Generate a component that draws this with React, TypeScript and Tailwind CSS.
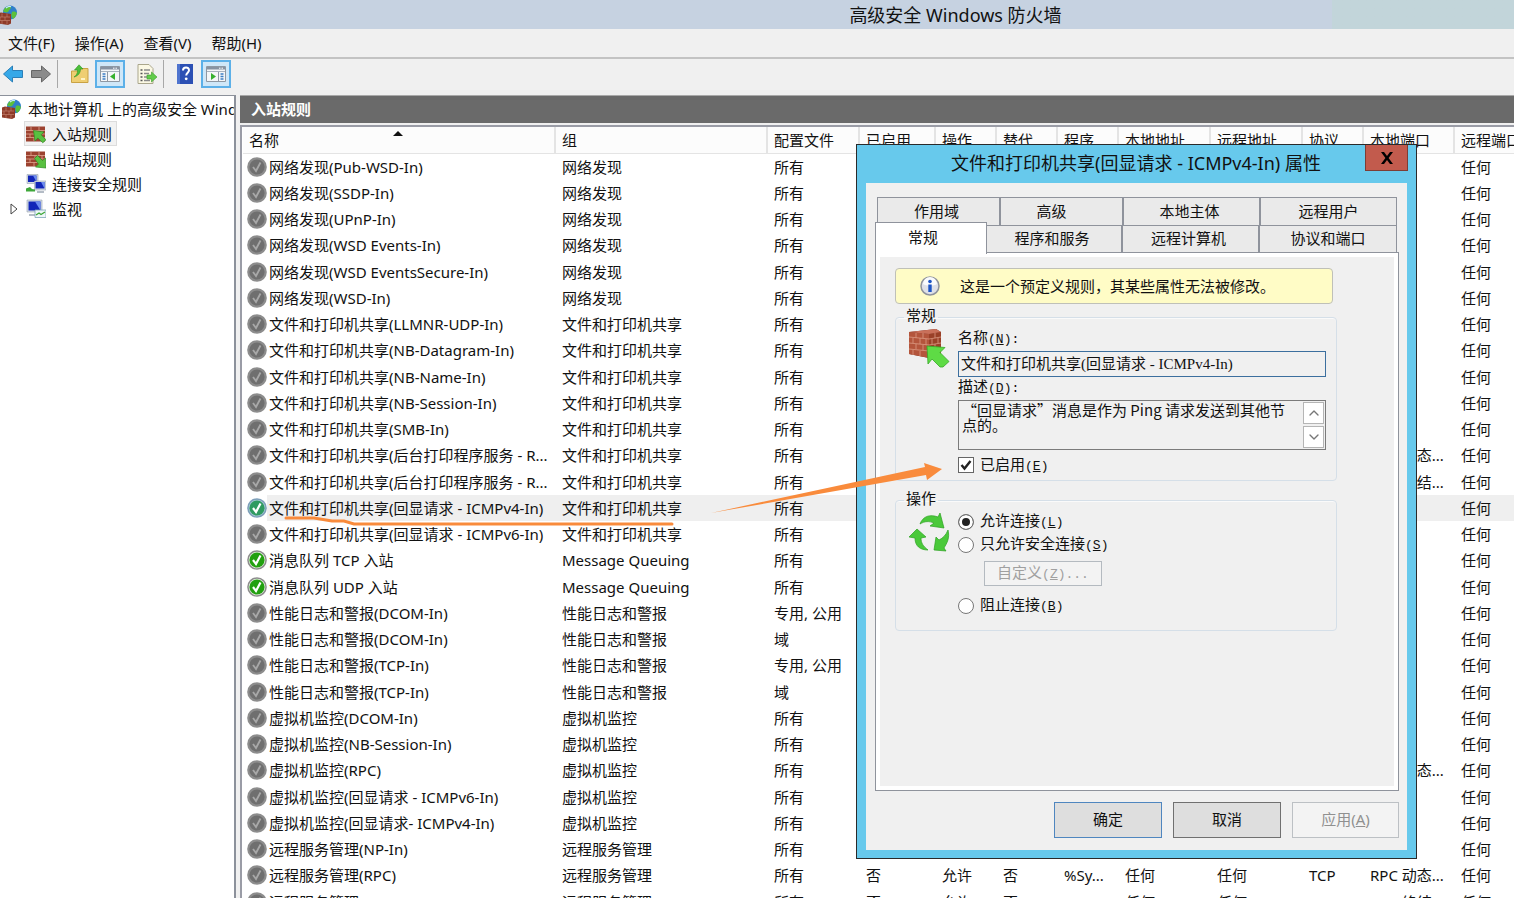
import React, { useState } from 'react';
import { ChevronDown, ChevronUp } from 'lucide-react';

type RuleState = 'off' | 'on' | 'selected';

interface Rule {
  name: string;
  group: string;
  profile: string;
  state?: RuleState;
  program?: string;
  protocol?: string;
  localPort?: string;
}

const DISCOVERY = '网络发现';
const SHARING = '文件和打印机共享';
const PERF = '性能日志和警报';
const VM = '虚拟机监控';
const REMOTE = '远程服务管理';

const RULES: Rule[] = [
  { name: '网络发现(Pub-WSD-In)', group: DISCOVERY, profile: '所有', protocol: 'UDP', localPort: '3702' },
  { name: '网络发现(SSDP-In)', group: DISCOVERY, profile: '所有', protocol: 'UDP', localPort: '1900' },
  { name: '网络发现(UPnP-In)', group: DISCOVERY, profile: '所有', localPort: '2869' },
  { name: '网络发现(WSD Events-In)', group: DISCOVERY, profile: '所有', localPort: '5357' },
  { name: '网络发现(WSD EventsSecure-In)', group: DISCOVERY, profile: '所有', localPort: '5358' },
  { name: '网络发现(WSD-In)', group: DISCOVERY, profile: '所有', protocol: 'UDP', localPort: '3702' },
  { name: '文件和打印机共享(LLMNR-UDP-In)', group: SHARING, profile: '所有', protocol: 'UDP', localPort: '5355' },
  { name: '文件和打印机共享(NB-Datagram-In)', group: SHARING, profile: '所有', protocol: 'UDP', localPort: '138' },
  { name: '文件和打印机共享(NB-Name-In)', group: SHARING, profile: '所有', protocol: 'UDP', localPort: '137' },
  { name: '文件和打印机共享(NB-Session-In)', group: SHARING, profile: '所有', localPort: '139' },
  { name: '文件和打印机共享(SMB-In)', group: SHARING, profile: '所有', localPort: '445' },
  { name: '文件和打印机共享(后台打印程序服务 - R...', group: SHARING, profile: '所有', localPort: 'RPC 动态...' },
  { name: '文件和打印机共享(后台打印程序服务 - R...', group: SHARING, profile: '所有', localPort: 'RPC 终结...' },
  { name: '文件和打印机共享(回显请求 - ICMPv4-In)', group: SHARING, profile: '所有', state: 'selected', protocol: 'ICMPv4' },
  { name: '文件和打印机共享(回显请求 - ICMPv6-In)', group: SHARING, profile: '所有', protocol: 'ICMPv6' },
  { name: '消息队列 TCP 入站', group: 'Message Queuing', profile: '所有', state: 'on' },
  { name: '消息队列 UDP 入站', group: 'Message Queuing', profile: '所有', state: 'on', protocol: 'UDP' },
  { name: '性能日志和警报(DCOM-In)', group: PERF, profile: '专用, 公用', localPort: '135' },
  { name: '性能日志和警报(DCOM-In)', group: PERF, profile: '域', localPort: '135' },
  { name: '性能日志和警报(TCP-In)', group: PERF, profile: '专用, 公用' },
  { name: '性能日志和警报(TCP-In)', group: PERF, profile: '域' },
  { name: '虚拟机监控(DCOM-In)', group: VM, profile: '所有', localPort: '135' },
  { name: '虚拟机监控(NB-Session-In)', group: VM, profile: '所有', localPort: '139' },
  { name: '虚拟机监控(RPC)', group: VM, profile: '所有', localPort: 'RPC 动态...' },
  { name: '虚拟机监控(回显请求 - ICMPv6-In)', group: VM, profile: '所有', protocol: 'ICMPv6' },
  { name: '虚拟机监控(回显请求- ICMPv4-In)', group: VM, profile: '所有', protocol: 'ICMPv4' },
  { name: '远程服务管理(NP-In)', group: REMOTE, profile: '所有', localPort: '445' },
  { name: '远程服务管理(RPC)', group: REMOTE, profile: '所有', localPort: 'RPC 动态...' },
  { name: '远程服务管理(RPC-EPMAP)', group: REMOTE, profile: '所有', localPort: 'RPC 终结...' },
];

const COLUMNS = [
  { label: '名称', width: 'w-[312px]' },
  { label: '组', width: 'w-[212px]' },
  { label: '配置文件', width: 'w-[92px]' },
  { label: '已启用', width: 'w-[76px]' },
  { label: '操作', width: 'w-[61px]' },
  { label: '替代', width: 'w-[61px]' },
  { label: '程序', width: 'w-[61px]' },
  { label: '本地地址', width: 'w-[92px]' },
  { label: '远程地址', width: 'w-[92px]' },
  { label: '协议', width: 'w-[61px]' },
  { label: '本地端口', width: 'w-[91px]' },
  { label: '远程端口', width: '' },
];

/* ---------- icons ---------- */

const FirewallGlobe: React.FC = () => (
  <svg className="h-5 w-5 shrink-0" viewBox="0 0 20 20" aria-hidden="true">
    <circle cx="12" cy="7.5" r="7" fill="#2f7fc9" />
    <path d="M7 3c2-2 5-2 6-1 0 2-2 3-3 5-2 1-4 0-5-1zM14 7c2-1 4 0 5 1-1 3-2 5-4 6-2-2-2-5-1-7z" fill="#5cc03a" />
    <path d="M8 3c2-1.600 4-1.800 5-1.300" stroke="#c8ecff" strokeWidth="1.200" fill="none" />
    <path d="M0 8.500 3 7.500 13 9v9.500L10 20 0 18.500z" fill="#8e3a28" />
    <path d="M0 12h12M0 15.500h12M4 8.500V12M9 8.500V12M2 12v3.500M7 12v3.500M4 15.500V19M9 15.500v4" stroke="#c98a76" strokeWidth=".6" />
  </svg>
);

const BrickRule: React.FC<{ out?: boolean }> = ({ out }) => (
  <svg className="h-5 w-5 shrink-0" viewBox="0 0 20 20" aria-hidden="true">
    <path d="M0 2.500h19v15H0z" fill="#9c4230" />
    <path d="M0 6.500h19M0 10h19M0 13.500h19M5 3v3.500M13 3v3.500M9 6.500V10M16 6.500V10M4 10v3.500M12 10v3.500M8 13.500V17M15 13.500V17" stroke="#dfa591" strokeWidth=".8" />
    {out ? (
      <path d="m8.500 9.500 3-3 5 5 3-2.500.5 10-10.500-1 3-3z" fill="#58c040" stroke="#2f8a24" strokeWidth=".7" />
    ) : (
      <path d="M7.500 6.500 18 8l-2.800 2.800 4.800 5-3.200 3-5-4.800L9 17z" fill="#58c040" stroke="#2f8a24" strokeWidth=".7" />
    )}
  </svg>
);

const Computers: React.FC = () => (
  <svg className="h-5 w-5 shrink-0" viewBox="0 0 20 20" aria-hidden="true">
    <path d="M1 .5h11v9H1z" fill="#d5dde6" stroke="#97a3b0" strokeWidth=".6" />
    <path d="M2 1.500h8.500V8H2z" fill="#1226b8" />
    <path d="M7 1.500h3.500V8z" fill="#6d8df0" />
    <path d="M8.500 7H20v9H8.500z" fill="#d5dde6" stroke="#97a3b0" strokeWidth=".6" />
    <path d="M9.500 8h9v6.500h-9z" fill="#1226b8" />
    <path d="M15 8h3.500v6.500z" fill="#6d8df0" />
    <path d="M11 17h7v2h-7z" fill="#b4bcc6" />
    <path d="M0 14.500 4 13l2 2 3 .5v2H0z" fill="#3fa83a" />
  </svg>
);

const MonitorChart: React.FC = () => (
  <svg className="h-5 w-5 shrink-0" viewBox="0 0 20 20" aria-hidden="true">
    <path d="M1 1h15v12H1z" fill="#d5dde6" stroke="#97a3b0" strokeWidth=".6" />
    <path d="M2.500 2.500h12v9h-12z" fill="#1226b8" />
    <path d="M9 2.500h5.500v9z" fill="#6d8df0" />
    <path d="M3 15h8v2H3z" fill="#b4bcc6" />
    <path d="M9 11h11v7.500H9z" fill="#eef6f8" stroke="#7fa6b8" strokeWidth=".8" />
    <path d="m10 16 3-2 2 1.500 4-2.500" stroke="#3fa83a" strokeWidth="1.400" fill="none" />
  </svg>
);

const StatusIcon: React.FC<{ state: RuleState }> = ({ state }) => {
  const ring = state === 'selected' ? '#7d9fb9' : '#8d8d8d';
  const fill = state === 'off' ? '#6f6f6f' : state === 'on' ? '#22a010' : '#2f9a60';
  return (
    <svg className="h-5 w-5 shrink-0" viewBox="0 0 20 20" aria-hidden="true">
      <circle cx="10" cy="10" r="9.800" fill={ring} />
      {state !== 'off' && <circle cx="10" cy="10" r="8.300" fill={state === 'on' ? '#e8f3e4' : '#a9cbd6'} />}
      <circle cx="10" cy="10" r="7.600" fill={fill} />
      <path
        d="m6 10 3 4 4.500-8.500"
        fill="none"
        stroke={state === 'off' ? '#a8a8a8' : '#ffffff'}
        strokeWidth={state === 'off' ? 1.8 : 2.2}
      />
    </svg>
  );
};

const ArrowIcon: React.FC<{ forward?: boolean }> = ({ forward }) => (
  <svg className="h-5 w-5" viewBox="0 0 20 20" aria-hidden="true">
    {forward ? (
      <path d="M.5 6.500h10V2l9 8-9 8v-4.500H.5z" fill="#8b8b8b" stroke="#666" />
    ) : (
      <path d="M19.500 6.500h-10V2l-9 8 9 8v-4.500h10z" fill="#36a8e8" stroke="#2b7fb8" />
    )}
  </svg>
);

const FolderUp: React.FC = () => (
  <svg className="h-5 w-5" viewBox="0 0 20 20" aria-hidden="true">
    <path d="M1.500 7h7l1.500-2.500h8V18.500h-16.500z" fill="#efce72" stroke="#c9a244" />
    <path d="M11 14h4v2h-4z" fill="#fff3c4" />
    <path d="M4 13c2-1 4-4 3.500-7H4.500L9 .8 13 5h-2.500c0 4-2.500 7-6.500 8z" fill="#4cbf3a" stroke="#2f9424" strokeWidth=".6" />
  </svg>
);

const PaneIcon: React.FC<{ right?: boolean }> = ({ right }) => (
  <svg className="h-5 w-5" viewBox="0 0 20 20" aria-hidden="true">
    <path d="M.5 2.500h19v15H.5z" fill="#f4f6f8" stroke="#8e98a3" />
    <path d="M1 3h18v2.500H1z" fill="#8793a2" />
    <path d="M13 4.200h1.500M15.500 4.200H17" stroke="#fff" />
    <path d="M1 7.500h18" stroke="#a9b3be" />
    {right ? (
      <>
        <path d="M12.500 8v9.500" stroke="#8e98a3" />
        <path d="M14.500 10h3M14.500 12.500h3M14.500 15h3" stroke="#3d7fc4" strokeWidth="1.300" />
        <path d="m5 9 5 3.500L5 16z" fill="#38b130" />
      </>
    ) : (
      <>
        <path d="M7.500 8v9.500" stroke="#8e98a3" />
        <path d="M2.500 10h3M2.500 12.500h3M2.500 15h3" stroke="#3d7fc4" strokeWidth="1.300" />
        <path d="m15 9-5 3.500 5 3.500z" fill="#38b130" />
      </>
    )}
  </svg>
);

const ExportIcon: React.FC = () => (
  <svg className="h-5 w-5" viewBox="0 0 20 20" aria-hidden="true">
    <path d="M1 .5h11l4 4v15H1z" fill="#fbf8e4" stroke="#aaa68c" />
    <path d="M3.500 6h2M3.500 9.500h2M3.500 13h2M3.500 16.500h2" stroke="#555" strokeWidth="1.300" />
    <path d="M7 6h6M7 9.500h5M7 13h3M7 16.500h6" stroke="#8a8a8a" strokeWidth="1.300" />
    <path d="M10 11h4.500V8l5.500 5-5.500 5v-3H10z" fill="#63cc4b" stroke="#3c9d2c" strokeWidth=".6" />
  </svg>
);

const HelpBook: React.FC = () => (
  <svg className="h-5 w-4" viewBox="0 0 16 20" aria-hidden="true">
    <path d="M0 0h16v20H0z" fill="#2c50b4" />
    <path d="M0 0h3v20H0z" fill="#4f74cf" />
    <path d="M6 6.500c0-4 6-4 6-.3 0 2.500-2.800 2.500-2.800 5.300" fill="none" stroke="#fff" strokeWidth="2" />
    <circle cx="9.200" cy="14.800" r="1.400" fill="#fff" />
  </svg>
);

const InfoIcon: React.FC = () => (
  <svg className="h-5 w-5 shrink-0" viewBox="0 0 20 20" aria-hidden="true">
    <circle cx="10" cy="10" r="9" fill="#dfe1e8" stroke="#8f939c" strokeWidth="1.500" />
    <path d="M3 8a7 7 0 0 1 14 0c-3 2-11 2-14 0z" fill="#fafbfd" />
    <circle cx="10" cy="5.500" r="1.800" fill="#1d55c4" />
    <path d="M8.300 8.500h3.400V16H8.300z" fill="#1d55c4" />
  </svg>
);

const LargeBrick: React.FC = () => (
  <svg className="mt-0.5 h-10 w-[42px] shrink-0" viewBox="0 0 42 40" aria-hidden="true">
    <path d="M1 3 28 0l5 3v22l-12 4L1 25z" fill="#7a2d1e" />
    <path d="m1 3 20 2v24L1 25z" fill="#b4553c" />
    <path d="m21 5 12-2v22l-12 4z" fill="#9a4028" />
    <path d="M1 3 28 0l5 3-12 2z" fill="#c9705a" />
    <path d="m1 8 20 2 12-2M1 14l20 2 12-2M1 20l20 2 12-2M8 4v5M15 4v5M5 9v5M12 9v6M18 10v6M8 15v5M15 16v5M5 21v5M12 22v5M27 4v5M24 10v5M30 9v5M27 15v5M24 22v5" stroke="#dc9a84" strokeWidth=".8" fill="none" />
    <path d="m19 17 18 1.500-5 5 9 9-6 5.500h-3l-8-8-4 5z" fill="#5edb45" stroke="#35a826" strokeWidth=".8" />
  </svg>
);

const CycleIcon: React.FC = () => (
  <svg className="mt-0.5 h-10 w-[42px] shrink-0" viewBox="0 0 42 40" aria-hidden="true">
    <g fill="#4ac93a" stroke="#2ba01f" strokeWidth=".7">
      <path d="M12 12C15 4 22 2 30 5l2-4 4 15-14-2 4-3c-5-2-9-2-14 1z" />
      <path d="M1 25 9 17l9 8-5 1c0 5 2 8 7 12-8 0-13-4-13-12z" />
      <path d="M40 18c2 8-1 13-4 18l2 3-12-1 2-13 3 3c4-2 7-5 9-10z" />
    </g>
  </svg>
);

/* ---------- main window ---------- */

const MENUS = ['文件(F)', '操作(A)', '查看(V)', '帮助(H)'];

const Toolbar: React.FC = () => (
  <div className="flex h-9 items-center pb-1.5 pl-[3px]" role="toolbar">
    <button aria-label="后退"><ArrowIcon /></button>
    <button aria-label="前进" className="ml-2"><ArrowIcon forward /></button>
    <span className="ml-1.5 h-7 w-px bg-[#a8a8a8]" />
    <button aria-label="上一级" className="ml-3"><FolderUp /></button>
    <button aria-label="显示控制台树" className="ml-[5px] flex h-7 w-[30px] items-center justify-center border-2 border-[#5cb0e8] bg-[#cfe7f8]">
      <PaneIcon />
    </button>
    <button aria-label="导出列表" className="ml-3"><ExportIcon /></button>
    <span className="ml-1.5 h-7 w-px bg-[#a8a8a8]" />
    <button aria-label="帮助" className="ml-[13px]"><HelpBook /></button>
    <button aria-label="显示操作窗格" className="ml-2 flex h-7 w-[30px] items-center justify-center border-2 border-[#5cb0e8] bg-[#cfe7f8]">
      <PaneIcon right />
    </button>
  </div>
);

const NAV = [
  { label: '入站规则', icon: <BrickRule />, selected: true },
  { label: '出站规则', icon: <BrickRule out /> },
  { label: '连接安全规则', icon: <Computers /> },
  { label: '监视', icon: <MonitorChart />, expandable: true },
];

const Tree: React.FC = () => (
  <nav className="w-[236px] shrink-0 overflow-hidden border-t border-r-2 border-[#8c919b] bg-white whitespace-nowrap">
    <div className="flex h-[25px] items-center gap-1.5 pl-0.5">
      <FirewallGlobe />
      <span>本地计算机 上的高级安全 Windows 防火墙</span>
    </div>
    {NAV.map((item) => (
      <div key={item.label} className="flex h-[25px] items-center">
        <span className="flex w-6 justify-center pl-1">
          {item.expandable && (
            <svg className="h-3 w-2" viewBox="0 0 8 12" aria-hidden="true">
              <path d="m1 1 6 5-6 5z" fill="#fff" stroke="#444" />
            </svg>
          )}
        </span>
        <button
          className={`flex h-[25px] items-center gap-1.5 border px-px pr-1 ${
            item.selected ? 'border-[#dcdcdc] bg-[#f2f2f2]' : 'border-transparent'
          }`}
        >
          {item.icon}
          {item.label}
        </button>
      </div>
    ))}
  </nav>
);

const RuleTable: React.FC = () => (
  <table className="w-full table-fixed border-collapse text-left whitespace-nowrap">
    <thead>
      <tr className="h-[26px]">
        {COLUMNS.map((col, idx) => (
          <th
            key={col.label}
            className={`relative overflow-hidden border-r-2 border-b border-[#e4e4e4] bg-[#fcfcfc] p-0 pl-[6px] font-normal last:border-r-0 ${col.width}`}
          >
            {col.label}
            {idx === 0 && (
              <svg className="absolute top-1 left-[150px] h-[5px] w-2.5" viewBox="0 0 10 5" aria-hidden="true">
                <path d="M0 5 5 0l5 5z" fill="#111" />
              </svg>
            )}
          </th>
        ))}
      </tr>
    </thead>
    <tbody>
      {RULES.map((rule, idx) => {
        const active = rule.state === 'selected';
        const cells = [
          rule.group,
          rule.profile,
          rule.state ? '是' : '否',
          '允许',
          '否',
          rule.protocol?.startsWith('ICMP') ? '任何' : '%Sy...',
          '任何',
          '任何',
          rule.protocol ?? 'TCP',
          rule.localPort ?? '任何',
          '任何',
        ];
        return (
          <tr key={idx} className="h-[26px] nth-[4n]:h-[27px]">
            <td className="p-0">
              <div className="flex h-[26px] items-center pl-1">
                <StatusIcon state={rule.state ?? 'off'} />
                <span className={`h-[26px] flex-1 pl-0.5 leading-[26px] ${active ? 'bg-[#efefef]' : ''}`}>{rule.name}</span>
              </div>
            </td>
            {cells.map((cell, i) => (
              <td key={i} className={`overflow-hidden p-0 pl-[7px] ${active ? 'bg-[#efefef]' : ''}`}>
                {cell}
              </td>
            ))}
          </tr>
        );
      })}
    </tbody>
  </table>
);

/* ---------- properties dialog ---------- */

const Key: React.FC<{ k: string; after?: string }> = ({ k, after = '' }) => (
  <span className="font-['Liberation_Mono',monospace] text-[13px]">
    (<u>{k}</u>){after}
  </span>
);

const BACK_TABS = [
  { label: '作用域', width: 'w-[124px] pr-1' },
  { label: '高级', width: 'w-[123px] pr-5' },
  { label: '本地主体', width: 'w-[137px] pr-1' },
  { label: '远程用户', width: 'flex-1' },
];

const FRONT_TABS = [
  { label: '程序和服务', width: 'w-[136px] pr-1' },
  { label: '远程计算机', width: 'w-[137px] pr-1' },
  { label: '协议和端口', width: 'flex-1' },
];

const TAB = 'border-t border-r-2 border-[#8f939c] bg-[#eaeaea] last:border-r';
const RADIO =
  'h-4 w-4 appearance-none rounded-full border border-[#777] bg-white checked:bg-[#222] checked:shadow-[inset_0_0_0_3px_#fff]';
const GROUP = 'rounded border border-[#d5dfe8] pl-3 shadow-[inset_0_1px_0_#fafafa]';
const LEGEND = '-ml-1 h-5 px-0.5 leading-4';

const PropertiesDialog: React.FC = () => {
  const [enabled, setEnabled] = useState(true);
  const [action, setAction] = useState('allow');

  return (
    <section
      role="dialog"
      aria-labelledby="dialog-title"
      className="absolute top-36 left-[856px] w-[561px] border border-[#2a2a2a] bg-[#67c9ec] px-[9px] pb-2 leading-5"
    >
      <header className="flex h-[38px] items-start">
        <h2 id="dialog-title" className="flex-1 pl-[41px] text-center text-[18px] leading-9">
          文件和打印机共享(回显请求 - ICMPv4-In) 属性
        </h2>
        <button aria-label="关闭" className="-mr-px flex h-[26px] w-[43px] items-center justify-center border border-t-0 border-[#7d3d35] bg-[#c25b4d]">
          <svg className="h-3 w-3.5" viewBox="0 0 14 12" aria-hidden="true">
            <path d="M1 0h3l3 4 3-4h3L8.600 6 13 12h-3L7 8l-3 4H1l4.400-6z" fill="#000" />
          </svg>
        </button>
      </header>

      <div className="bg-[#f0f0f0] pt-3.5 pr-2 pb-3 pl-[9px]">
        <div role="tablist">
          <div className="flex h-7 px-0.5">
            {BACK_TABS.map((tab) => (
              <button key={tab.label} role="tab" className={`pb-px first:border-l ${TAB} ${tab.width}`}>
                {tab.label}
              </button>
            ))}
          </div>
          <div className="flex h-[27px] pr-0.5">
            <button
              role="tab"
              aria-selected="true"
              className="relative z-10 -mt-[3px] h-8 w-[112px] border border-b-0 border-[#8f939c] bg-white pr-4 pb-1"
            >
              常规
            </button>
            {FRONT_TABS.map((tab) => (
              <button key={tab.label} role="tab" className={`pb-0.5 ${TAB} ${tab.width}`}>
                {tab.label}
              </button>
            ))}
          </div>
        </div>

        <div role="tabpanel" className="h-[539px] border border-[#8f939c] bg-white p-1">
          <div className="h-full bg-[#f0f0f0] pt-[11px] pr-[57px] pl-[15px]">
            <p className="mr-1 flex h-9 items-center rounded border border-[#bfc0b8] bg-[#fffcc6] pl-6">
              <InfoIcon />
              <span className="ml-5">这是一个预定义规则，其某些属性无法被修改。</span>
            </p>

            <fieldset className={`mt-[3px] pr-2.5 pb-[5px] ${GROUP}`}>
              <legend className={LEGEND}>常规</legend>
              <div className="flex gap-2">
                <LargeBrick />
                <div className="flex flex-1 flex-col">
                  <label htmlFor="rule-name" className="h-5">名称<Key k="N" after=":" /></label>
                  <input
                    id="rule-name"
                    readOnly
                    defaultValue="文件和打印机共享(回显请求 - ICMPv4-In)"
                    className="mt-1 h-[26px] border border-[#3c6f9e] bg-[#f0f0f0] px-0.5 pb-1 font-['Liberation_Serif','Noto_Sans_CJK_SC',serif] outline-none"
                  />
                  <label htmlFor="rule-desc" className="h-[18px] leading-[18px]">描述<Key k="D" after=":" /></label>
                  <div className="mt-[5px] flex h-[50px] border border-[#7b7b7b] p-px">
                    <textarea
                      id="rule-desc"
                      readOnly
                      defaultValue="“回显请求”消息是作为 Ping 请求发送到其他节点的。"
                      className="min-w-0 flex-1 resize-none overflow-hidden bg-[#f0f0f0] pr-2 pl-0.5 font-['Noto_Sans_CJK_SC',sans-serif] leading-[15px] outline-none"
                    />
                    <div className="flex w-[21px] flex-col justify-between gap-0.5">
                      <button aria-label="向上滚动" className="flex flex-1 items-center justify-center border border-[#b5b5b5] bg-white">
                        <ChevronUp className="h-4 w-4 text-[#777]" />
                      </button>
                      <button aria-label="向下滚动" className="flex flex-1 items-center justify-center border border-[#b5b5b5] bg-white">
                        <ChevronDown className="h-4 w-4 text-[#777]" />
                      </button>
                    </div>
                  </div>
                  <label className="mt-[5px] flex h-5 items-center gap-1.5">
                    <span className="grid h-4 w-4">
                      <input
                        type="checkbox"
                        checked={enabled}
                        onChange={(e) => setEnabled(e.target.checked)}
                        className="col-start-1 row-start-1 h-4 w-4 appearance-none border border-[#666] bg-white"
                      />
                      {enabled && (
                        <svg className="pointer-events-none col-start-1 row-start-1 h-4 w-4" viewBox="0 0 16 16" aria-hidden="true">
                          <path d="m3.500 8 3 3.500L12.500 4" fill="none" stroke="#222" strokeWidth="2.400" />
                        </svg>
                      )}
                    </span>
                    <span>已启用<Key k="E" /></span>
                  </label>
                </div>
              </div>
            </fieldset>

            <fieldset className={`mt-[9px] pb-[13px] ${GROUP}`}>
              <legend className={LEGEND}>操作</legend>
              <div className="flex gap-2">
                <CycleIcon />
                <div className="flex flex-col items-start">
                  <label className="flex h-[23px] items-center gap-1.5">
                    <input type="radio" name="action" className={RADIO} checked={action === 'allow'} onChange={() => setAction('allow')} />
                    <span>允许连接<Key k="L" /></span>
                  </label>
                  <label className="flex h-[23px] items-center gap-1.5">
                    <input type="radio" name="action" className={RADIO} checked={action === 'secure'} onChange={() => setAction('secure')} />
                    <span>只允许安全连接<Key k="S" /></span>
                  </label>
                  <button disabled className="mt-[5px] ml-[26px] h-[25px] w-[118px] border border-[#b4bac0] bg-[#f3f3f3] pb-px text-[#a0a0a0]">
                    自定义<Key k="Z" after="..." />
                  </button>
                  <label className="mt-2 flex h-[23px] items-center gap-1.5">
                    <input type="radio" name="action" className={RADIO} checked={action === 'block'} onChange={() => setAction('block')} />
                    <span>阻止连接<Key k="B" /></span>
                  </label>
                </div>
              </div>
            </fieldset>
          </div>
        </div>

        <footer className="mt-[11px] flex justify-end gap-[11px]">
          <button className="h-9 w-[108px] border border-[#4f86bf] bg-[#dedede] pb-0.5">确定</button>
          <button className="h-9 w-[108px] border border-[#707070] bg-[#dedede] pb-0.5">取消</button>
          <button disabled className="h-9 w-[107px] border border-[#bcc0c4] bg-[#f3f3f3] pb-0.5 text-[#909090]">
            应用(<u>A</u>)
          </button>
        </footer>
      </div>
    </section>
  );
};

/* hand-drawn marks over the rule list */
const Annotations: React.FC = () => (
  <svg className="pointer-events-none absolute top-[460px] left-[280px] h-[70px] w-[670px]" viewBox="280 460 670 70" aria-hidden="true">
    <path d="M286 518h28l18 3h12l10 3h318" fill="none" stroke="#f98b3c" strokeWidth="3" strokeLinecap="round" />
    <path d="M711 513 925 467l-1-4 18 6-15 11-1-5z" fill="#f98b3c" />
  </svg>
);

export default function App() {
  return (
    <div className="relative flex h-screen flex-col overflow-hidden bg-[#f0f0f0] font-['Noto_Sans','Noto_Sans_CJK_SC',sans-serif] text-[15px] leading-5 text-[#111]">
      <header className="flex h-[29px] shrink-0 items-center bg-linear-to-r from-[#c6d2e1] from-88% to-[#c2d5da] to-88%">
        <span className="-ml-0.5"><FirewallGlobe /></span>
        <h1 className="flex-1 pl-[379px] text-center text-[18px] leading-7">高级安全 Windows 防火墙</h1>
      </header>
      <div className="flex h-[30px] shrink-0 items-center gap-5 border-b-2 border-[#c3c3c3] pl-2" role="menubar">
        {MENUS.map((menu) => (
          <button key={menu} role="menuitem">{menu}</button>
        ))}
      </div>
      <Toolbar />
      <div className="flex min-h-0 flex-1">
        <Tree />
        <main className="ml-1 flex min-w-0 flex-1 flex-col">
          <h2 className="h-[30px] shrink-0 border-t border-b-2 border-t-[#a8a8a8] border-b-[#f0f0f0] bg-[#6a6a6a] pl-[11px] leading-[26px] font-semibold text-white">
            入站规则
          </h2>
          <div className="min-h-0 flex-1 overflow-hidden border-t-2 border-l-2 border-[#9a9ca6] bg-white pl-px">
            <RuleTable />
          </div>
        </main>
      </div>
      <PropertiesDialog />
      <Annotations />
    </div>
  );
}
